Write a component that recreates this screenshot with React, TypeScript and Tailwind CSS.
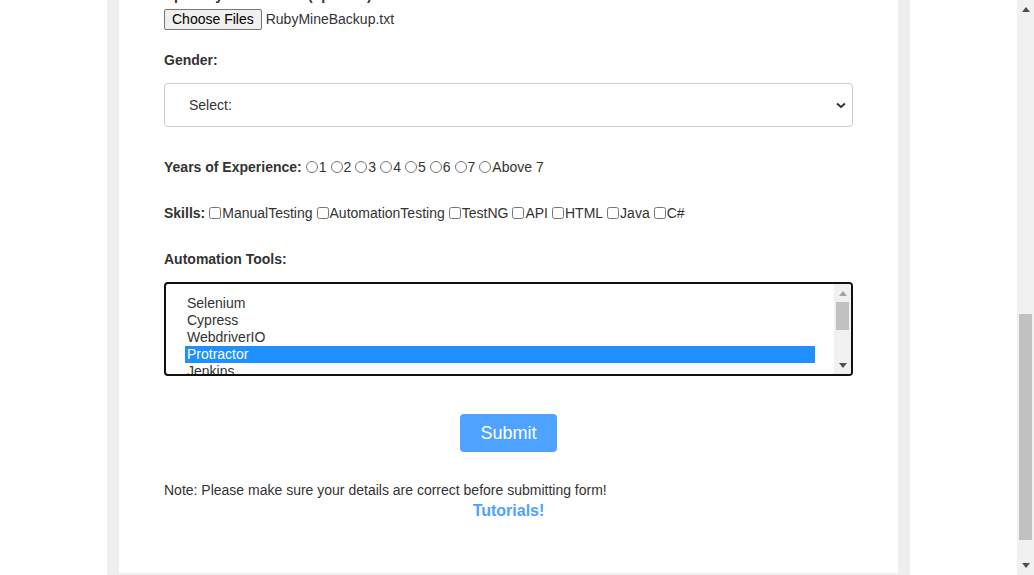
import { useState } from "react";

const years = ["1", "2", "3", "4", "5", "6", "7", "Above 7"];
const skills = ["ManualTesting", "AutomationTesting", "TestNG", "API", "HTML", "Java", "C#"];
const tools = ["Selenium", "Cypress", "WebdriverIO", "Protractor", "Jenkins", "Appium"];

function Triangle({ up, color }: { up?: boolean; color: string }) {
  return (
    <svg width="8" height="5" viewBox="0 0 8 5">
      <path d={up ? "M0 5 L4 0 L8 5 Z" : "M0 0 L8 0 L4 5 Z"} fill={color} />
    </svg>
  );
}

export default function App() {
  const [picked, setPicked] = useState("Protractor");

  return (
    <div className="flex h-[575px] overflow-hidden bg-white font-['Liberation_Sans',Arial,sans-serif] text-[14px] text-[#333]">
      <div className="flex flex-1 justify-center">
        <div className="w-[803px] bg-[#eeeeee] px-[12px] pb-[2px]">
          <div className="flow-root h-full bg-white px-[45px]">
            <div className="-mt-[13px] font-bold leading-[16px]">Upload your Resume (optional):</div>

            <div className="mt-[6px] flex items-center">
              <button className="h-[21px] rounded-[2px] border border-[#767676] bg-[#efefef] px-[7px] leading-[17px] text-black">
                Choose Files
              </button>
              <span className="ml-[4px] leading-[17px]">RubyMineBackup.txt</span>
            </div>

            <div className="mt-[22px] font-bold leading-[16px]">Gender:</div>
            <div className="mt-[15px] flex h-[44px] items-center justify-between rounded-[4px] border border-[#cccccc] pl-[24px] pr-[6px]">
              <span>Select:</span>
              <svg width="10" height="7" viewBox="0 0 10 7">
                <path d="M1 1.5 L5 5 L9 1.5" stroke="#333" strokeWidth="2" fill="none" />
              </svg>
            </div>

            <div className="mt-[32px] flex h-[16px] items-center leading-[16px]">
              <span className="mr-[4px] font-bold">Years of Experience:</span>
              {years.map((y) => (
                <label key={y} className="mr-[4px] flex items-center">
                  <input type="radio" name="exp" className="m-0 mr-[1px] h-[12px] w-[12px]" />
                  {y}
                </label>
              ))}
            </div>

            <div className="mt-[30px] flex h-[16px] items-center leading-[16px]">
              <span className="mr-[4px] font-bold">Skills:</span>
              {skills.map((s) => (
                <label key={s} className="mr-[4px] flex items-center">
                  <input type="checkbox" className="m-0 mr-[1px] h-[12px] w-[12px]" />
                  {s}
                </label>
              ))}
            </div>

            <div className="mt-[30px] font-bold leading-[16px]">Automation Tools:</div>
            <div className="mt-[15px] flex h-[94px] overflow-hidden rounded-[4px] border-2 border-[#111]">
              <ul className="flex-1 pl-[19px] pr-[19px] pt-[11px]">
                {tools.map((t) => (
                  <li
                    key={t}
                    onClick={() => setPicked(t)}
                    className={
                      t === picked
                        ? "h-[17px] bg-[#1e90ff] pl-[2px] leading-[17px] text-white"
                        : "h-[17px] pl-[2px] leading-[17px]"
                    }
                  >
                    {t}
                  </li>
                ))}
              </ul>
              <div className="flex w-[17px] flex-col items-center bg-[#f1f1f1]">
                <div className="mt-[6px] flex h-[6px] items-center">
                  <Triangle up color="#a3a3a3" />
                </div>
                <div className="mt-[6px] h-[28px] w-[13px] bg-[#c1c1c1]" />
                <div className="flex-1" />
                <div className="mb-[6px] flex h-[6px] items-center">
                  <Triangle color="#505050" />
                </div>
              </div>
            </div>

            <div className="mt-[38px] flex justify-center">
              <button className="h-[38px] w-[97px] rounded-[4px] bg-[#4da3ff] text-[18px] text-white">
                Submit
              </button>
            </div>

            <p className="mt-[30px] leading-[16px]">
              Note: Please make sure your details are correct before submitting form!
            </p>
            <p className="mt-[4px] text-center text-[16px] font-bold leading-[18px] text-[#4da3ff]">
              Tutorials!
            </p>
          </div>
        </div>
      </div>

      <div className="flex w-[17px] flex-col items-center bg-[#f1f1f1]">
        <div className="mt-[6px] flex h-[6px] items-center">
          <Triangle up color="#505050" />
        </div>
        <div className="mt-[302px] h-[226px] w-[13px] bg-[#c1c1c1]" />
        <div className="flex-1" />
        <div className="mb-[7px] flex h-[6px] items-center">
          <Triangle color="#505050" />
        </div>
      </div>
    </div>
  );
}
